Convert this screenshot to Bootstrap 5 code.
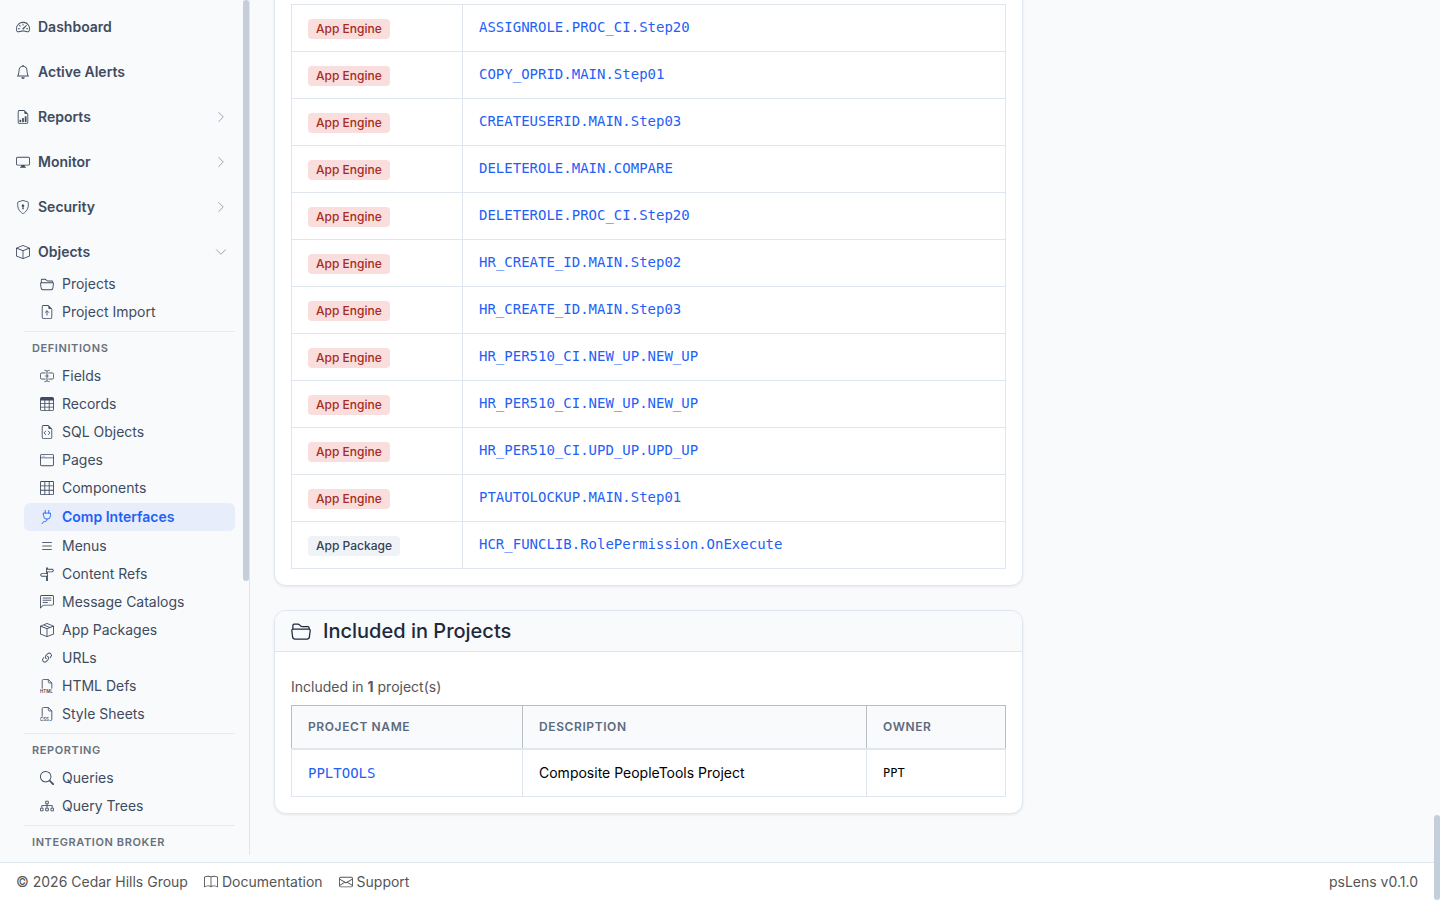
<!DOCTYPE html>
<html lang="en">
<head>
<meta charset="utf-8">
<meta name="viewport" content="width=device-width, initial-scale=1">
<title>psLens</title>
<link href="https://cdn.jsdelivr.net/npm/bootstrap@5.3.0/dist/css/bootstrap.min.css" rel="stylesheet">
<style>
body{font-family:Inter,"Liberation Sans",sans-serif;font-size:14px;line-height:21px;background:#f8fafc;color:#000;padding-right:6px}
a{color:#1f61f5;text-decoration:none}
.ic{width:14px;height:14px;fill:currentColor;flex:none}
.ln{fill:none;stroke:currentColor}
.scroll-thumb{position:absolute;right:0;width:6px;border-radius:3px;background:#c5cfdc}
.side-thumb{top:0;height:68%}
.page-thumb{bottom:0;height:85px}
.sidebar{width:250px;border-right:1px solid #e0e6ee;margin-bottom:7px;padding:8px 14px 0 8px}
.side-main{color:#3f4b5e;font-weight:600;padding:8px;margin-bottom:8px}
.side-main.opened{margin-bottom:0}
.chev{color:#7b8798;width:12px;height:12px}
.side-sub{color:#3f4b5e;padding:4px 16px;line-height:20px;border-radius:6px}
.side-sub.active{background:#e7edfb;color:#1f61f5;font-weight:600;margin:1px 0}
.side-label{border-top:1px solid #e6ebf2;margin-top:5px;padding:8px 8px 6px;font-size:11px;line-height:16px;font-weight:600;letter-spacing:.6px;color:#69717a}
.panel{border:1px solid #e0e6ee;border-radius:12px;box-shadow:0 1px 3px rgba(30,41,59,.08)}
.panel .card-header{background:#f8fafc;border-bottom:1px solid #e0e6ee;border-radius:11px 11px 0 0;padding:8px 16px}
.panel h2{font-size:20px;line-height:24px;font-weight:500;color:#1e293b}
.panel h2 .ic{width:20px;height:20px}
.grid-table{border-collapse:collapse;width:100%;table-layout:fixed}
.grid-table td{border:1px solid #e0e6ee;padding:0 16px;height:48px;vertical-align:middle}
.grid-table.usage td{height:47px;padding-bottom:2px}
.grid-table th{border:1px solid #b9bdc3;border-bottom:2px solid #e0e6ee;background:#f8fafc;padding:0 16px;height:43px;font-size:12px;font-weight:600;letter-spacing:.6px;color:#5c6a80;text-transform:uppercase}
.c-type{width:171px}.c-name{width:231px}.c-desc{width:344px}
.mono{font-family:"DejaVu Sans Mono",monospace}
.mono-sm{font-size:12px}
.tag{display:block;width:max-content;font-size:12px;line-height:20px;font-weight:500;padding:0 8px;border-radius:4px;margin-top:4px}
.tag-eng{background:#fadedd;color:#a62b24}
.tag-pkg{background:#eff3f8;color:#344155}
.note{color:#555;margin:8px 0}
.foot{background:#fff;border-top:1px solid #e0e6ee;padding:8px 16px;color:#555}
.foot a{color:#555}
</style>
</head>
<body class="vh-100 overflow-hidden d-flex flex-column position-relative">
<svg class="d-none">
<symbol id="gauge" viewBox="0 0 16 16"><path d="M8 4a.5.5 0 0 1 .5.5V6a.5.5 0 0 1-1 0V4.500A.5.5 0 0 1 8 4M3.732 5.732a.5.5 0 0 1 .707 0l.915.914a.5.5 0 1 1-.708.708l-.914-.915a.5.5 0 0 1 0-.707M2 10a.5.5 0 0 1 .5-.5h1.586a.5.5 0 0 1 0 1H2.500A.5.5 0 0 1 2 10m9.500 0a.5.5 0 0 1 .5-.5h1.500a.5.5 0 0 1 0 1H12a.5.5 0 0 1-.5-.5m.754-4.246a.39.39 0 0 0-.527-.02L7.547 9.310a.91.91 0 1 0 1.302 1.258l3.434-4.297a.39.39 0 0 0-.029-.518z"/><path fill-rule="evenodd" d="M0 10a8 8 0 1 1 15.547 2.661c-.442 1.253-1.845 1.602-2.932 1.250C11.309 13.488 9.475 13 8 13c-1.474 0-3.310.488-4.615.911-1.087.352-2.490.003-2.932-1.250A8 8 0 0 1 0 10m8-7a7 7 0 0 0-6.603 9.329c.203.575.923.876 1.680.630C4.397 12.533 6.358 12 8 12s3.604.532 4.923.960c.757.245 1.477-.056 1.680-.631A7 7 0 0 0 8 3"/></symbol>
<symbol id="bell" viewBox="0 0 16 16"><path d="M8 16a2 2 0 0 0 2-2H6a2 2 0 0 0 2 2M8 1.918l-.797.161A4 4 0 0 0 4 6c0 .628-.134 2.197-.459 3.742-.160.767-.376 1.566-.663 2.258h10.244c-.287-.692-.502-1.490-.663-2.258C12.134 8.197 12 6.628 12 6a4 4 0 0 0-3.203-3.920zM14.220 12c.223.447.481.801.780 1H1c.299-.199.557-.553.780-1C2.680 10.200 3 6.880 3 6c0-2.420 1.720-4.440 4.005-4.901a1 1 0 1 1 1.990 0A5 5 0 0 1 13 6c0 .880.320 4.200 1.220 6"/></symbol>
<symbol id="page" viewBox="0 0 16 16"><path d="M14 4.500V14a2 2 0 0 1-2 2H4a2 2 0 0 1-2-2V2a2 2 0 0 1 2-2h5.500zm-3 0A1.500 1.500 0 0 1 9.500 3V1H4a1 1 0 0 0-1 1v12a1 1 0 0 0 1 1h8a1 1 0 0 0 1-1V4.500z"/></symbol>
<symbol id="report" viewBox="0 0 16 16"><use href="#page"/><path d="M10 13.500a.5.5 0 0 0 .5.5h1a.5.5 0 0 0 .5-.5v-6a.5.5 0 0 0-.5-.5h-1a.5.5 0 0 0-.5.5zm-2.500.5a.5.5 0 0 1-.5-.5v-4a.5.5 0 0 1 .5-.5h1a.5.5 0 0 1 .5.5v4a.5.5 0 0 1-.5.5zm-3 0a.5.5 0 0 1-.5-.5v-2a.5.5 0 0 1 .5-.5h1a.5.5 0 0 1 .5.5v2a.5.5 0 0 1-.5.5z"/></symbol>
<symbol id="display" viewBox="0 0 16 16"><path d="M0 4s0-2 2-2h12s2 0 2 2v6s0 2-2 2h-4q0 1 .250 1.500H11a.5.5 0 0 1 0 1H5a.5.5 0 0 1 0-1h.750Q6 13 6 12H2s-2 0-2-2zm1.398-.855a.76.76 0 0 0-.254.302A1.500 1.500 0 0 0 1 4.010V10c0 .325.078.502.145.602q.105.156.302.254a1.500 1.500 0 0 0 .538.143L2.010 11H14c.325 0 .502-.078.602-.145a.76.76 0 0 0 .254-.302 1.500 1.500 0 0 0 .143-.538L15 9.990V4c0-.325-.078-.502-.145-.602a.76.76 0 0 0-.302-.254A1.500 1.500 0 0 0 13.990 3H2c-.325 0-.502.078-.602.145"/></symbol>
<symbol id="shield" viewBox="0 0 16 16"><path class="ln" d="M8 .5C6.700 .9 4.300 1.700 2.500 2.100q-.5.200-.5.700C1.300 8 3 11.500 5.300 13.600 6.500 14.700 7.500 15.500 8 15.500s1.500-.8 2.700-1.900C13 11.500 14.700 8 14 2.800q0-.5-.5-.7C11.700 1.700 9.300.9 8 .5z"/><path d="M9.500 6.500a1.500 1.500 0 0 1-1 1.415l.385 1.990a.5.5 0 0 1-.491.595h-.788a.5.5 0 0 1-.490-.595l.384-1.990a1.500 1.500 0 1 1 2-1.415"/></symbol>
<symbol id="box" viewBox="0 0 16 16"><path d="M8.186 1.113a.5.5 0 0 0-.372 0L1.846 3.500 8 5.961 14.154 3.500zM15 4.239l-6.500 2.600v7.922l6.500-2.600V4.240zM7.500 14.762V6.838L1 4.239v7.923zM7.443.184a1.500 1.500 0 0 1 1.114 0l7.129 2.852A.5.5 0 0 1 16 3.500v8.662a1 1 0 0 1-.629.928l-7.185 2.874a.5.5 0 0 1-.372 0L.630 13.090a1 1 0 0 1-.630-.928V3.500a.5.5 0 0 1 .314-.464z"/></symbol>
<symbol id="boxseam" viewBox="0 0 16 16"><use href="#box"/><path class="ln" d="M4.500 2.400 11.300 5.100"/></symbol>
<symbol id="right" viewBox="0 0 16 16"><path class="ln" stroke-linecap="round" stroke-linejoin="round" d="m5 2 6 6-6 6"/></symbol>
<symbol id="down" viewBox="0 0 16 16"><path class="ln" stroke-linecap="round" stroke-linejoin="round" d="m2 5 6 6 6-6"/></symbol>
<symbol id="folder" viewBox="0 0 16 16"><path d="M1 3.500A1.500 1.500 0 0 1 2.500 2h2.764c.958 0 1.760.560 2.311 1.184C7.985 3.648 8.480 4 9 4h4.500A1.500 1.500 0 0 1 15 5.500v.640c.570.265.940.876.856 1.546l-.640 5.124A2.500 2.500 0 0 1 12.733 15H3.266a2.500 2.500 0 0 1-2.481-2.190l-.640-5.124A1.500 1.500 0 0 1 1 6.140zM2 6h12v-.500a.5.5 0 0 0-.5-.5H9c-.964 0-1.710-.629-2.174-1.154C6.374 3.334 5.820 3 5.264 3H2.500a.5.5 0 0 0-.5.5zm-.367 1a.5.5 0 0 0-.496.562l.640 5.124A1.500 1.500 0 0 0 3.266 14h9.468a1.500 1.500 0 0 0 1.489-1.314l.640-5.124A.5.5 0 0 0 14.367 7z"/></symbol>
<symbol id="upload" viewBox="0 0 16 16"><use href="#page"/><path class="ln" stroke-linecap="round" stroke-linejoin="round" d="M8 11.500V7M6 8.500l2-2 2 2"/></symbol>
<symbol id="cursor" viewBox="0 0 16 16"><path class="ln" stroke-linecap="round" d="M5.500 1.500c1.500 0 2.500 1 2.500 1v11s-1 1-2.500 1M10.500 1.500c-1.500 0-2.500 1-2.500 1M8 13.500s1 1 2.500 1M6.500 8h3M10 4.500h4a1.500 1.500 0 0 1 1.500 1.500v4a1.500 1.500 0 0 1-1.500 1.500h-4M6 4.500H2A1.500 1.500 0 0 0 .5 6v4A1.500 1.500 0 0 0 2 11.500h4"/></symbol>
<symbol id="table" viewBox="0 0 16 16"><path d="M0 2a2 2 0 0 1 2-2h12a2 2 0 0 1 2 2v12a2 2 0 0 1-2 2H2a2 2 0 0 1-2-2zm15 2h-4v3h4zm0 4h-4v3h4zm0 4h-4v3h3a1 1 0 0 0 1-1zm-5 3v-3H6v3zm-5 0v-3H1v2a1 1 0 0 0 1 1zm-4-4h4V8H1zm0-4h4V4H1zm5-3v3h4V4zm4 4H6v3h4z"/></symbol>
<symbol id="code" viewBox="0 0 16 16"><use href="#page"/><path class="ln" stroke-linecap="round" stroke-linejoin="round" d="M6.500 7 4.700 9l1.800 2M9.500 7l1.800 2-1.800 2"/></symbol>
<symbol id="window" viewBox="0 0 16 16"><path d="M2.500 4a.5.5 0 1 0 0-1 .5.5 0 0 0 0 1m2-.5a.5.5 0 1 1-1 0 .5.5 0 0 1 1 0m1 .5a.5.5 0 1 0 0-1 .5.5 0 0 0 0 1"/><path d="M2 1a2 2 0 0 0-2 2v10a2 2 0 0 0 2 2h12a2 2 0 0 0 2-2V3a2 2 0 0 0-2-2zm13 2v2H1V3a1 1 0 0 1 1-1h12a1 1 0 0 1 1 1M2 14a1 1 0 0 1-1-1V6h14v7a1 1 0 0 1-1 1z"/></symbol>
<symbol id="grid" viewBox="0 0 16 16"><path d="M0 1.500A1.500 1.500 0 0 1 1.500 0h13A1.500 1.500 0 0 1 16 1.500v13a1.500 1.500 0 0 1-1.500 1.500h-13A1.500 1.500 0 0 1 0 14.500zM1.500 1a.5.5 0 0 0-.5.5V5h4V1zM5 6H1v4h4zm1 4h4V6H6zm-1 1H1v3.500a.5.5 0 0 0 .5.5H5zm1 0v4h4v-4zm5 0v4h3.500a.5.5 0 0 0 .5-.5V11zm0-1h4V6h-4zm0-5h4V1.500a.5.5 0 0 0-.5-.5H11zm-1 0V1H6v4z"/></symbol>
<symbol id="plug" viewBox="0 0 16 16"><path class="ln" stroke-linecap="round" d="M6 .5v3M10 .5v3M4 3.500h8v3a4 4 0 0 1-8 0zM8 10.500c0 2-.6 2.400-2.500 2.700-1.800.3-2.700.8-3 2.300"/></symbol>
<symbol id="list" viewBox="0 0 16 16"><path class="ln" stroke-linecap="round" d="M3 4h10M3 8h10M3 12h10"/></symbol>
<symbol id="signpost" viewBox="0 0 16 16"><path d="M7 7V1.414a1 1 0 0 1 2 0V2h5a1 1 0 0 1 .8.400l.975 1.300a.5.5 0 0 1 0 .600L14.800 5.600a1 1 0 0 1-.8.400H9v10H7v-5H2a1 1 0 0 1-.8-.400L.225 9.300a.5.5 0 0 1 0-.600L1.200 7.400A1 1 0 0 1 2 7zm1 3V8H2l-.750 1L2 10zm0-5h6l.750-1L14 3H8z"/></symbol>
<symbol id="chat" viewBox="0 0 16 16"><path d="M14 1a1 1 0 0 1 1 1v8a1 1 0 0 1-1 1H4.414A2 2 0 0 0 3 11.586l-2 2V2a1 1 0 0 1 1-1zM2 0a2 2 0 0 0-2 2v12.793a.5.5 0 0 0 .854.353l2.853-2.853A1 1 0 0 1 4.414 12H14a2 2 0 0 0 2-2V2a2 2 0 0 0-2-2z"/><path class="ln" stroke-linecap="round" d="M3.500 3.500h9M3.500 6h9M3.500 8.500h5"/></symbol>
<symbol id="link" viewBox="0 0 16 16"><path d="M4.715 6.542 3.343 7.914a3 3 0 1 0 4.243 4.243l1.828-1.829A3 3 0 0 0 8.586 5.500L8 6.086a1 1 0 0 0-.154.199 2 2 0 0 1 .861 3.337L6.880 11.450a2 2 0 1 1-2.830-2.830l.793-.792a4 4 0 0 1-.128-1.287z"/><path d="M6.586 4.672A3 3 0 0 0 7.414 9.500l.775-.776a2 2 0 0 1-.896-3.346L9.120 3.550a2 2 0 1 1 2.830 2.830l-.793.792c.112.420.155.855.128 1.287l1.372-1.372a3 3 0 1 0-4.243-4.243z"/></symbol>
<symbol id="html" viewBox="0 0 16 16"><path class="ln" d="M2.500 11V2A1.500 1.500 0 0 1 4 .5h5.500l4 4V11M9.500.5V3A1.500 1.500 0 0 0 11 4.500h2.500"/><text x="0" y="16" font-size="5" font-weight="600">HTML</text></symbol>
<symbol id="css" viewBox="0 0 16 16"><path class="ln" d="M2.500 11V2A1.500 1.500 0 0 1 4 .5h5.500l4 4V14a1.500 1.500 0 0 1-1.500 1.500h-1M9.500.5V3A1.500 1.500 0 0 0 11 4.500h2.500"/><text x="0" y="16" font-size="5" font-weight="600">CSS</text></symbol>
<symbol id="search" viewBox="0 0 16 16"><path d="M11.742 10.344a6.500 6.500 0 1 0-1.397 1.398h-.001q.044.060.098.115l3.850 3.850a1 1 0 0 0 1.415-1.414l-3.850-3.850a1 1 0 0 0-.115-.100zM12 6.500a5.500 5.500 0 1 1-11 0 5.500 5.500 0 0 1 11 0"/></symbol>
<symbol id="tree" viewBox="0 0 16 16"><path class="ln" d="M6.500 2.500h3v3h-3zM.5 10.500h3v3h-3zM6.500 10.500h3v3h-3zM12.500 10.500h3v3h-3zM8 5.500v5M2 10V7.500h12V10" stroke-linejoin="round"/></symbol>
<symbol id="book" viewBox="0 0 16 16"><path d="M1 2.828c.885-.370 2.154-.769 3.388-.893 1.330-.134 2.458.063 3.112.752v9.746c-.935-.530-2.120-.603-3.213-.493-1.180.120-2.370.461-3.287.811zm7.500-.141c.654-.689 1.782-.886 3.112-.752 1.234.124 2.503.523 3.388.893v9.923c-.918-.350-2.107-.692-3.287-.810-1.094-.111-2.278-.039-3.213.492zM8 1.783C7.015.936 5.587.810 4.287.940c-1.514.153-3.042.672-3.994 1.105A.5.5 0 0 0 0 2.500v11a.5.5 0 0 0 .707.455c.882-.400 2.303-.881 3.680-1.020 1.409-.142 2.590.087 3.223.877a.5.5 0 0 0 .780 0c.633-.790 1.814-1.019 3.222-.877 1.378.139 2.800.620 3.681 1.020A.5.5 0 0 0 16 13.500v-11a.5.5 0 0 0-.293-.455c-.952-.433-2.480-.952-3.994-1.105C10.413.809 8.985.936 8 1.783"/></symbol>
<symbol id="mail" viewBox="0 0 16 16"><path d="M0 4a2 2 0 0 1 2-2h12a2 2 0 0 1 2 2v8a2 2 0 0 1-2 2H2a2 2 0 0 1-2-2zm2-1a1 1 0 0 0-1 1v.217l7 4.200 7-4.200V4a1 1 0 0 0-1-1zm13 2.383-4.708 2.825L15 11.105zm-.034 6.876-5.640-3.471L8 9.583l-1.326-.795-5.640 3.470A1 1 0 0 0 2 13h12a1 1 0 0 0 .966-.741M1 11.105l4.708-2.897L1 5.383z"/></symbol>
</svg>

<div class="d-flex flex-grow-1 overflow-hidden">
<aside class="sidebar flex-shrink-0 position-relative overflow-hidden">
<nav aria-label="Main" class="d-flex flex-column">
<a href="#" class="side-main d-flex align-items-center gap-2"><svg class="ic"><use href="#gauge"/></svg>Dashboard</a>
<a href="#" class="side-main d-flex align-items-center gap-2"><svg class="ic"><use href="#bell"/></svg>Active Alerts</a>
<a href="#" class="side-main d-flex align-items-center gap-2"><svg class="ic"><use href="#report"/></svg>Reports<svg class="ic chev ms-auto"><use href="#right"/></svg></a>
<a href="#" class="side-main d-flex align-items-center gap-2"><svg class="ic"><use href="#display"/></svg>Monitor<svg class="ic chev ms-auto"><use href="#right"/></svg></a>
<a href="#" class="side-main d-flex align-items-center gap-2"><svg class="ic"><use href="#shield"/></svg>Security<svg class="ic chev ms-auto"><use href="#right"/></svg></a>
<a href="#" class="side-main opened d-flex align-items-center gap-2"><svg class="ic"><use href="#box"/></svg>Objects<svg class="ic chev ms-auto"><use href="#down"/></svg></a>
<div class="d-flex flex-column ms-3">
<a href="#" class="side-sub d-flex align-items-center gap-2"><svg class="ic"><use href="#folder"/></svg>Projects</a>
<a href="#" class="side-sub d-flex align-items-center gap-2"><svg class="ic"><use href="#upload"/></svg>Project Import</a>
<div class="side-label">DEFINITIONS</div>
<a href="#" class="side-sub d-flex align-items-center gap-2"><svg class="ic"><use href="#cursor"/></svg>Fields</a>
<a href="#" class="side-sub d-flex align-items-center gap-2"><svg class="ic"><use href="#table"/></svg>Records</a>
<a href="#" class="side-sub d-flex align-items-center gap-2"><svg class="ic"><use href="#code"/></svg>SQL Objects</a>
<a href="#" class="side-sub d-flex align-items-center gap-2"><svg class="ic"><use href="#window"/></svg>Pages</a>
<a href="#" class="side-sub d-flex align-items-center gap-2"><svg class="ic"><use href="#grid"/></svg>Components</a>
<a href="#" class="side-sub active d-flex align-items-center gap-2" aria-current="page"><svg class="ic"><use href="#plug"/></svg>Comp Interfaces</a>
<a href="#" class="side-sub d-flex align-items-center gap-2"><svg class="ic"><use href="#list"/></svg>Menus</a>
<a href="#" class="side-sub d-flex align-items-center gap-2"><svg class="ic"><use href="#signpost"/></svg>Content Refs</a>
<a href="#" class="side-sub d-flex align-items-center gap-2"><svg class="ic"><use href="#chat"/></svg>Message Catalogs</a>
<a href="#" class="side-sub d-flex align-items-center gap-2"><svg class="ic"><use href="#boxseam"/></svg>App Packages</a>
<a href="#" class="side-sub d-flex align-items-center gap-2"><svg class="ic"><use href="#link"/></svg>URLs</a>
<a href="#" class="side-sub d-flex align-items-center gap-2"><svg class="ic"><use href="#html"/></svg>HTML Defs</a>
<a href="#" class="side-sub d-flex align-items-center gap-2"><svg class="ic"><use href="#css"/></svg>Style Sheets</a>
<div class="side-label">REPORTING</div>
<a href="#" class="side-sub d-flex align-items-center gap-2"><svg class="ic"><use href="#search"/></svg>Queries</a>
<a href="#" class="side-sub d-flex align-items-center gap-2"><svg class="ic"><use href="#tree"/></svg>Query Trees</a>
<div class="side-label">INTEGRATION BROKER</div>
</div>
</nav>
<div class="scroll-thumb side-thumb"></div>
</aside>

<main class="container-fluid px-4 pb-5 d-flex flex-column justify-content-end">
<div class="row">
<div class="col-8">
<section class="card panel mb-4">
<div class="card-body p-3">
<table class="grid-table usage">
<colgroup><col class="c-type"><col></colgroup>
<tbody>
<tr><td><span class="tag tag-eng">App Engine</span></td><td><a href="#" class="mono">ASSIGNROLE.PROC_CI.Step20</a></td></tr>
<tr><td><span class="tag tag-eng">App Engine</span></td><td><a href="#" class="mono">COPY_OPRID.MAIN.Step01</a></td></tr>
<tr><td><span class="tag tag-eng">App Engine</span></td><td><a href="#" class="mono">CREATEUSERID.MAIN.Step03</a></td></tr>
<tr><td><span class="tag tag-eng">App Engine</span></td><td><a href="#" class="mono">DELETEROLE.MAIN.COMPARE</a></td></tr>
<tr><td><span class="tag tag-eng">App Engine</span></td><td><a href="#" class="mono">DELETEROLE.PROC_CI.Step20</a></td></tr>
<tr><td><span class="tag tag-eng">App Engine</span></td><td><a href="#" class="mono">HR_CREATE_ID.MAIN.Step02</a></td></tr>
<tr><td><span class="tag tag-eng">App Engine</span></td><td><a href="#" class="mono">HR_CREATE_ID.MAIN.Step03</a></td></tr>
<tr><td><span class="tag tag-eng">App Engine</span></td><td><a href="#" class="mono">HR_PER510_CI.NEW_UP.NEW_UP</a></td></tr>
<tr><td><span class="tag tag-eng">App Engine</span></td><td><a href="#" class="mono">HR_PER510_CI.NEW_UP.NEW_UP</a></td></tr>
<tr><td><span class="tag tag-eng">App Engine</span></td><td><a href="#" class="mono">HR_PER510_CI.UPD_UP.UPD_UP</a></td></tr>
<tr><td><span class="tag tag-eng">App Engine</span></td><td><a href="#" class="mono">PTAUTOLOCKUP.MAIN.Step01</a></td></tr>
<tr><td><span class="tag tag-pkg">App Package</span></td><td><a href="#" class="mono">HCR_FUNCLIB.RolePermission.OnExecute</a></td></tr>
</tbody>
</table>
</div>
</section>
<section class="card panel">
<div class="card-header"><h2 class="d-flex align-items-center mb-0"><svg class="ic me-2"><use href="#folder"/></svg><span class="ms-1">Included in Projects</span></h2></div>
<div class="card-body p-3">
<p class="note">Included in <strong>1</strong> project(s)</p>
<table class="grid-table">
<colgroup><col class="c-name"><col class="c-desc"><col></colgroup>
<thead><tr><th>Project Name</th><th>Description</th><th>Owner</th></tr></thead>
<tbody><tr><td><a href="#" class="mono">PPLTOOLS</a></td><td>Composite PeopleTools Project</td><td><span class="mono mono-sm">PPT</span></td></tr></tbody>
</table>
</div>
</section>
</div>
</div>
</main>
</div>

<footer class="foot d-flex gap-3">
<span>© 2026 Cedar Hills Group</span>
<a href="#" class="d-flex align-items-center gap-1"><svg class="ic"><use href="#book"/></svg>Documentation</a>
<a href="#" class="d-flex align-items-center gap-1"><svg class="ic"><use href="#mail"/></svg>Support</a>
<span class="ms-auto">psLens v0.1.0</span>
</footer>
<div class="scroll-thumb page-thumb"></div>
<script src="https://cdn.jsdelivr.net/npm/bootstrap@5.3.0/dist/js/bootstrap.bundle.min.js"></script>
</body>
</html>
